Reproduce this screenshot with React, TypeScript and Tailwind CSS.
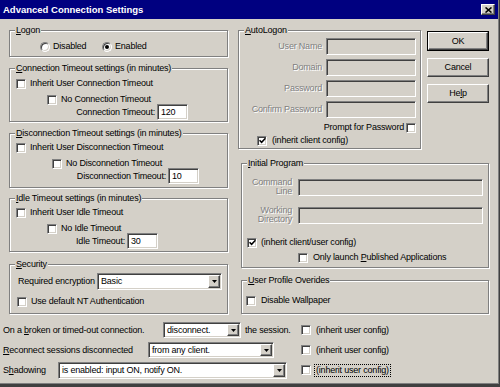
import React from "react";

const sunken =
  "border border-t-[#808080] border-l-[#808080] border-b-white border-r-white shadow-[inset_1px_1px_0_#404040,inset_-1px_-1px_0_#d4d0c8]";
const raised =
  "border border-t-white border-l-white border-b-[#404040] border-r-[#404040] shadow-[inset_-1px_-1px_0_#808080]";
const greyText = "text-[#808080] [text-shadow:1px_1px_0_#fff]";

function Check({ checked = false }: { checked?: boolean }) {
    return (
        <span className={`flex h-[10px] w-[10px] shrink-0 items-center justify-center bg-white ${sunken}`}>
            {checked && (
                <svg width="7" height="7" viewBox="0 0 7 7">
                    <path d="M0.5 3.2 L2.6 5.3 L6.5 1.2" fill="none" stroke="#000" strokeWidth="1.6" />
                </svg>
            )}
        </span>
    );
}

function Radio({ on = false }: { on?: boolean }) {
    return (
        <span className={`flex h-[10px] w-[10px] shrink-0 items-center justify-center rounded-full bg-white ${sunken}`}>
            {on && <span className="h-[4px] w-[4px] rounded-full bg-black" />}
        </span>
    );
}

function Field({ value, className, disabled }: { value?: string; className: string; disabled?: boolean }) {
    return (
        <div className={`flex items-center pl-[3px] ${sunken} ${disabled ? "bg-[#d4d0c8]" : "bg-white"} ${className}`}>
            {value}
        </div>
    );
}

function Combo({ value, className }: { value: string; className: string }) {
    return (
        <div className={`flex items-stretch bg-white p-[1px] ${sunken} ${className}`}>
            <span className="flex flex-1 items-center pl-[2px]">{value}</span>
            <span className={`flex w-[12px] items-center justify-center bg-[#d4d0c8] ${raised}`}>
                <svg width="5" height="3" viewBox="0 0 5 3">
                    <path d="M0 0H5L2.5 3Z" fill="#000" />
                </svg>
            </span>
        </div>
    );
}

function Group({ label, className, children }: { label: React.ReactNode; className: string; children?: React.ReactNode }) {
    return (
        <div className={`border border-[#808080] shadow-[1px_1px_0_#fff,inset_1px_1px_0_#fff] ${className}`}>
            <div className="-mt-[6px] ml-[5px] w-fit bg-[#d4d0c8] px-[1px] leading-[11px]">{label}</div>
            {children}
        </div>
    );
}

function CheckRow({ label, checked, className }: { label: React.ReactNode; checked?: boolean; className: string }) {
    return (
        <div className={`flex items-center ${className}`}>
            <Check checked={checked} />
            <span className="ml-[4px]">{label}</span>
        </div>
    );
}

function Btn({ children, isDefault }: { children: React.ReactNode; isDefault?: boolean }) {
    if (isDefault) {
        return (
            <div className="h-[20px] border border-black">
                <div className={`flex h-full items-center justify-center ${raised}`}>{children}</div>
            </div>
        );
    }
    return <div className={`flex h-[19px] items-center justify-center ${raised}`}>{children}</div>;
}

const autoFields = ["User Name", "Domain", "Password", "Confirm Password"];

const bottomRows = [
    {
        label: (
            <>
                On a <u>b</u>roken or timed-out connection.
            </>
        ),
        lw: "w-[160px]",
        value: "disconnect.",
        cw: "w-[78px] h-[16px]",
        extra: "the session.",
        focus: false,
    },
    {
        label: (
            <>
                <u>R</u>econnect sessions disconnected
            </>
        ),
        lw: "w-[145px]",
        value: "from any client.",
        cw: "w-[126px] h-[16px]",
        extra: "",
        focus: false,
    },
    {
        label: (
            <>
                S<u>h</u>adowing
            </>
        ),
        lw: "w-[55px]",
        value: "is enabled: input ON, notify ON.",
        cw: "w-[229px] h-[17px]",
        extra: "",
        focus: true,
    },
];

export default function App() {
    return (
        <div className="h-[387px] w-[500px] overflow-hidden bg-[#404040] font-['Liberation_Sans',Arial,sans-serif] text-[9px] leading-[11px] tracking-[-0.2px] text-black">
            <div className="h-[384px] w-[499px] border-b border-r border-[#808080] bg-[#d4d0c8]">
                {/* Title bar */}
                <div className="flex h-[19px] w-[498px] items-center justify-between bg-[#000080] pl-[3px] pr-[3px]">
                    <span className="text-[9.5px] font-bold tracking-normal text-white">Advanced Connection Settings</span>
                    <span className={`flex h-[11px] w-[14px] items-center justify-center bg-[#d4d0c8] ${raised}`}>
                        <svg width="7" height="6" viewBox="0 0 7 6">
                            <path d="M0.5 0.5L6.5 5.5M6.5 0.5L0.5 5.5" stroke="#000" strokeWidth="1.6" />
                        </svg>
                    </span>
                </div>

                <div className="flex pl-[9px] pt-[11px]">
                    {/* Left column */}
                    <div className="flex w-[219px] flex-col">
                        <Group label={<><u>L</u>ogon</>} className="h-[27px]">
                            <div className="mt-[5px] flex items-center pl-[30px]">
                                <div className="flex w-[62px] items-center">
                                    <Radio />
                                    <span className="ml-[3px]">Disabled</span>
                                </div>
                                <Radio on />
                                <span className="ml-[3px]">Enabled</span>
                            </div>
                        </Group>

                        <Group label={<><u>C</u>onnection Timeout settings (in minutes)</>} className="mt-[11px] h-[54px]">
                            <CheckRow label="Inherit User Connection Timeout" className="mt-[4px] pl-[6px]" />
                            <CheckRow label="No Connection Timeout" className="mt-[5px] pl-[37px]" />
                            <div className="-mt-[1px] flex items-center">
                                <span className="w-[147px] pr-[2px] text-right">Connection Timeout:</span>
                                <Field value="120" className="h-[16px] w-[31px]" />
                            </div>
                        </Group>

                        <Group label={<><u>D</u>isconnection Timeout settings (in minutes)</>} className="mt-[11px] h-[55px]">
                            <CheckRow label="Inherit User Disconnection Timeout" className="mt-[3px] pl-[6px]" />
                            <CheckRow label="No Disconnetion Timeout" className="mt-[5px] pl-[42px]" />
                            <div className="-mt-[1px] flex items-center">
                                <span className="w-[158px] pr-[2px] text-right">Disconnection Timeout:</span>
                                <Field value="10" className="h-[16px] w-[31px]" />
                            </div>
                        </Group>

                        <Group label={<><u>I</u>dle Timeout settings (in minutes)</>} className="mt-[10px] h-[54px]">
                            <CheckRow label="Inherit User Idle Timeout" className="mt-[3px] pl-[6px]" />
                            <CheckRow label="No Idle Timeout" className="mt-[5px] pl-[37px]" />
                            <div className="-mt-[1px] flex items-center">
                                <span className="w-[117px] pr-[2px] text-right">Idle Timeout:</span>
                                <Field value="30" className="h-[16px] w-[31px]" />
                            </div>
                        </Group>

                        <Group label={<><u>S</u>ecurity</>} className="mt-[12px] h-[50px]">
                            <div className="mt-[3px] flex items-center pl-[8px]">
                                <span className="w-[79px]">Required encryption</span>
                                <Combo value="Basic" className="h-[17px] w-[125px]" />
                            </div>
                            <CheckRow label="Use default NT Authentication" className="mt-[6px] pl-[7px]" />
                        </Group>
                    </div>

                    {/* Right column */}
                    <div className="ml-[10px] flex flex-col">
                        <div className="flex">
                            <Group label={<><u>A</u>utoLogon</>} className="h-[119px] w-[183px]">
                                <div className="mt-[2px] flex flex-col gap-[4px]">
                                    {autoFields.map((f) => (
                                        <div key={f} className="flex items-center">
                                            <span className={`w-[87px] pr-[4px] text-right ${greyText}`}>{f}</span>
                                            <Field disabled className="h-[17px] w-[90px]" />
                                        </div>
                                    ))}
                                </div>
                                <div className="mt-[4px] flex items-center justify-end pr-[4px]">
                                    <span className="mr-[2px]">Prompt for Password</span>
                                    <Check />
                                </div>
                                <div className="mt-[2px] flex items-center pl-[18px]">
                                    <Check checked />
                                    <span className="ml-[5px]">(inherit client config)</span>
                                </div>
                            </Group>

                            <div className="ml-[6px] mt-[1px] flex w-[62px] flex-col gap-[7px]">
                                <Btn isDefault>OK</Btn>
                                <Btn>Cancel</Btn>
                                <Btn>
                                    He<u>l</u>p
                                </Btn>
                            </div>
                        </div>

                        <Group label={<><u>I</u>nitial Program</>} className="ml-[3px] mt-[14px] h-[105px] w-[248px]">
                            <div className="mt-[9px] flex items-center">
                                <span className={`w-[56px] pr-[6px] text-right leading-[9px] ${greyText}`}>
                                    Command
                                    <br />
                                    Line
                                </span>
                                <Field disabled className="h-[17px] w-[185px]" />
                            </div>
                            <div className="mt-[10px] flex items-center">
                                <span className={`w-[56px] pr-[6px] text-right leading-[9px] ${greyText}`}>
                                    Working
                                    <br />
                                    Directory
                                </span>
                                <Field disabled className="h-[17px] w-[185px]" />
                            </div>
                            <CheckRow checked label="(inherit client/user config)" className="mt-[13px] pl-[5px]" />
                            <div className="mt-[4px] flex items-center pl-[56px]">
                                <Check />
                                <span className="ml-[5px]">
                                    Only launch <u>P</u>ublished Applications
                                </span>
                            </div>
                        </Group>

                        <Group label={<><u>U</u>ser Profile Overides</>} className="ml-[3px] mt-[12px] h-[34px] w-[248px]">
                            <div className="mt-[9px] flex items-center pl-[4px]">
                                <Check />
                                <span className="ml-[5px]">Disable Wallpaper</span>
                            </div>
                        </Group>
                    </div>
                </div>

                {/* Bottom rows */}
                <div className="mt-[6px] flex flex-col pl-[3px]">
                    {bottomRows.map((r, i) => (
                        <div key={i} className="flex h-[20px] items-center">
                            <div className="flex w-[298px] items-center">
                                <span className={r.lw}>{r.label}</span>
                                <Combo value={r.value} className={r.cw} />
                                {r.extra && <span className="ml-[4px]">{r.extra}</span>}
                            </div>
                            <Check />
                            <span
                                className={`ml-[3px] border px-[1px] ${r.focus ? "border-dotted border-black" : "border-transparent"}`}
                            >
                                (inherit user config)
                            </span>
                        </div>
                    ))}
                </div>
            </div>
        </div>
    );
}
